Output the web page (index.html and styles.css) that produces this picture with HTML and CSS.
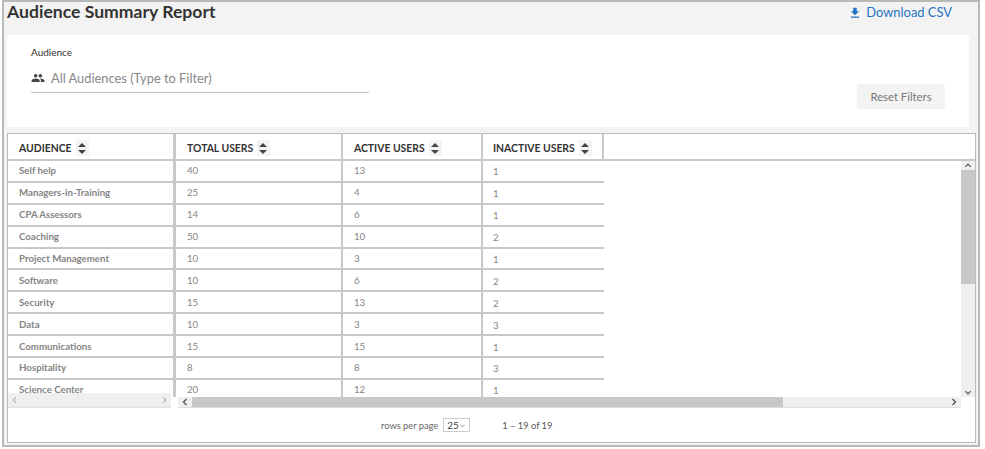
FILE: index.html
```html
<!DOCTYPE html>
<html lang="en">
  <head>
    <title>Audience Summary Report</title>
    <meta charset="utf-8" />
    <link rel="stylesheet" href="styles.css">
  </head>
  <body>
    <div class="report">
      <div class="top">
        <h1>Audience Summary Report</h1>
        <a class="download" href="#">
          <svg viewBox="0 0 24 24" width="14" height="14"><path d="M19 9h-4V3H9v6H5l7 7 7-7zM5 18v2h14v-2H5z"/></svg>
          Download CSV
        </a>
      </div>
      <div class="filters">
        <div class="filter">
          <label>Audience</label>
          <div class="filter-input">
            <svg viewBox="0 0 24 24" width="14" height="14"><path d="M16 11c1.66 0 2.99-1.34 2.99-3S17.66 5 16 5c-1.66 0-3 1.34-3 3s1.34 3 3 3zm-8 0c1.66 0 2.99-1.34 2.99-3S9.66 5 8 5C6.34 5 5 6.34 5 8s1.34 3 3 3zm0 2c-2.33 0-7 1.17-7 3.5V19h14v-2.5c0-2.33-4.67-3.5-7-3.5zm8 0c-.29 0-.62.02-.97.05 1.16.84 1.97 1.97 1.97 3.45V19h6v-2.5c0-2.33-4.67-3.5-7-3.5z"/></svg>
            <span>All Audiences (Type to Filter)</span>
          </div>
        </div>
        <button class="reset">Reset Filters</button>
      </div>
      <div class="grid">
        <div class="row head">
          <div class="cell first">AUDIENCE <i class="sort"></i></div>
          <div class="cell">TOTAL USERS <i class="sort"></i></div>
          <div class="cell">ACTIVE USERS <i class="sort"></i></div>
          <div class="cell">INACTIVE USERS <i class="sort"></i></div>
        </div>
        <div class="body">
          <div class="rows">
            <div class="row"><div class="cell first">Self help</div><div class="cell">40</div><div class="cell">13</div><div class="cell low">1</div></div>
            <div class="row"><div class="cell first">Managers-in-Training</div><div class="cell">25</div><div class="cell">4</div><div class="cell low">1</div></div>
            <div class="row"><div class="cell first">CPA Assessors</div><div class="cell">14</div><div class="cell">6</div><div class="cell low">1</div></div>
            <div class="row"><div class="cell first">Coaching</div><div class="cell">50</div><div class="cell">10</div><div class="cell low">2</div></div>
            <div class="row"><div class="cell first">Project Management</div><div class="cell">10</div><div class="cell">3</div><div class="cell low">1</div></div>
            <div class="row"><div class="cell first">Software</div><div class="cell">10</div><div class="cell">6</div><div class="cell low">2</div></div>
            <div class="row"><div class="cell first">Security</div><div class="cell">15</div><div class="cell">13</div><div class="cell low">2</div></div>
            <div class="row"><div class="cell first">Data</div><div class="cell">10</div><div class="cell">3</div><div class="cell low">3</div></div>
            <div class="row"><div class="cell first">Communications</div><div class="cell">15</div><div class="cell">15</div><div class="cell low">1</div></div>
            <div class="row"><div class="cell first">Hospitality</div><div class="cell">8</div><div class="cell">8</div><div class="cell low">3</div></div>
            <div class="row"><div class="cell first">Science Center</div><div class="cell">20</div><div class="cell">12</div><div class="cell low">1</div></div>
          </div>
          <div class="vbar">
            <svg class="arrow" viewBox="0 0 10 10" width="10" height="9"><path d="M2 6.5 5 3.5 8 6.5"/></svg>
            <div class="vthumb"></div>
            <svg class="arrow end" viewBox="0 0 10 10" width="10" height="9"><path d="M2 3.5 5 6.5 8 3.5"/></svg>
          </div>
        </div>
        <div class="hbars">
          <div class="hbar-frozen">
            <svg viewBox="0 0 10 10" width="9" height="10"><path d="M6.5 2 3.5 5 6.5 8"/></svg>
            <svg viewBox="0 0 10 10" width="9" height="10"><path d="M3.5 2 6.5 5 3.5 8"/></svg>
          </div>
          <div class="hbar">
            <svg class="arrow" viewBox="0 0 10 10" width="10" height="10"><path d="M6.5 2 3.5 5 6.5 8"/></svg>
            <div class="hthumb"></div>
            <svg class="arrow end" viewBox="0 0 10 10" width="10" height="10"><path d="M3.5 2 6.5 5 3.5 8"/></svg>
          </div>
        </div>
        <div class="pager">
          <span>rows per page</span>
          <div class="perpage">25
            <svg viewBox="0 0 10 10" width="7" height="7"><path d="M2 4 5 7 8 4"/></svg>
          </div>
          <span class="range">1 – 19 of 19</span>
        </div>
      </div>
    </div>
  </body>
</html>
```

FILE: styles.css
```css
body {
  margin: 0;
  font-family: Lato, "Open Sans", sans-serif;
  background: #fff;
}

.report {
  box-sizing: border-box;
  width: 978px;
  height: 447px;
  margin-left: 2px;
  padding: 0 0 0 3px;
  border: 2px solid #b9b9b9;
  background: #f3f3f3;
}

.top {
  display: flex;
  justify-content: space-between;
  align-items: flex-start;
  height: 33px;
}

h1 {
  margin: 0;
  font-size: 17.6px;
  font-weight: 700;
  line-height: 19px;
  color: #333;
}

.download {
  display: flex;
  align-items: center;
  gap: 4px;
  margin: 2px 26px 0 0;
  font-size: 12.9px;
  line-height: 17px;
  color: #1f74c4;
  text-decoration: none;
}

.download svg {
  fill: #1f74c4;
}

.filters {
  box-sizing: border-box;
  display: flex;
  justify-content: space-between;
  width: 962px;
  height: 92px;
  padding: 0 24px;
  border-radius: 3px;
  background: #fff;
}

.filter {
  width: 338px;
  padding-top: 11px;
}

.filter label {
  display: block;
  font-size: 10px;
  line-height: 13px;
  color: #333;
}

.filter-input {
  box-sizing: border-box;
  display: flex;
  align-items: center;
  gap: 6px;
  height: 28px;
  margin-top: 6px;
  padding-bottom: 2px;
  border-bottom: 1px solid #c4c4c4;
  font-size: 12.85px;
  color: #888;
}

.filter-input svg {
  fill: #444;
}

.reset {
  align-self: flex-end;
  width: 88px;
  height: 25px;
  margin-bottom: 18px;
  padding: 0;
  border: 0;
  border-radius: 3px;
  background: #f3f3f3;
  font-family: inherit;
  font-size: 11.3px;
  color: #777;
}

.grid {
  box-sizing: border-box;
  width: 969px;
  height: 310px;
  margin-top: 6px;
  border: 1px solid #bbb;
  background: #fff;
}

.row {
  display: grid;
  grid-template-columns: 168px 167px 140px 121px;
  height: 21.9px;
  font-size: 9.7px;
  font-weight: 700;
  color: #858585;
}

.cell {
  box-sizing: border-box;
  display: flex;
  align-items: center;
  padding: 0 0 1px 11px;
  border-right: 2px solid #c8c8c8;
  border-bottom: 2px solid #c8c8c8;
}

.cell.first {
  border-right-width: 3px;
}

.cell:last-child {
  border-right: 0;
  padding-left: 10px;
  font-weight: 400;
}

.cell.low {
  padding-top: 1px;
  padding-bottom: 0;
}

.row .cell:nth-child(2),
.row .cell:nth-child(3) {
  font-weight: 400;
}

.row.head {
  height: 25px;
  border-bottom: 2px solid #c8c8c8;
  box-sizing: content-box;
  font-size: 10.4px;
  color: #333;
}

.row.head .cell {
  border-bottom: 0;
  padding-top: 2px;
  padding-bottom: 0;
  font-weight: 700;
}

.row.head .cell:last-child {
  border-right: 2px solid #c8c8c8;
}

.sort {
  position: relative;
  width: 13px;
  height: 16px;
  margin-left: 4px;
  background: #f4f4f4;
}

.sort::before,
.sort::after {
  content: "";
  position: absolute;
  left: 2px;
  border-left: 4px solid transparent;
  border-right: 4px solid transparent;
}

.sort::before {
  top: 3px;
  border-bottom: 4px solid #444;
}

.sort::after {
  bottom: 2px;
  border-top: 4px solid #444;
}

.body {
  display: flex;
  height: 236px;
}

.rows {
  flex: 1;
  overflow: hidden;
}

.vbar {
  display: flex;
  flex-direction: column;
  align-items: center;
  width: 14px;
  background: #efefef;
}

.arrow {
  flex: none;
}

svg path {
  stroke-width: 1.4;
}

.arrow path,
.hbar-frozen path,
.perpage path {
  fill: none;
  stroke: #555;
}

.vthumb {
  width: 100%;
  height: 114px;
  background: #c8c8c8;
}

.arrow.end {
  margin-top: auto;
}

.hbars {
  display: flex;
  height: 11px;
}

.hbar-frozen {
  position: relative;
  display: flex;
  justify-content: space-between;
  align-items: center;
  box-sizing: border-box;
  width: 163px;
  height: 15px;
  margin-top: -4px;
  padding: 0 2px;
  background: #efefef;
  border-bottom: 2px solid #e4e4e4;
}

.hbar-frozen path {
  stroke: #bbb;
}

.hbar {
  display: flex;
  align-items: center;
  box-sizing: border-box;
  width: 783px;
  margin-left: 7px;
  border-bottom: 1px solid #ddd;
  background: #efefef;
}

.hbar .arrow {
  margin: 0 2px;
}

.hbar .arrow.end {
  margin: 0 2px 0 auto;
}

.hthumb {
  width: 591px;
  height: 100%;
  background: #c8c8c8;
}

.pager {
  display: flex;
  align-items: center;
  height: 34px;
  padding-left: 373px;
  font-size: 9.3px;
  color: #666;
}

.perpage {
  box-sizing: border-box;
  display: flex;
  justify-content: space-between;
  align-items: center;
  width: 27px;
  height: 14px;
  margin-left: 5px;
  padding: 0 3px;
  border: 1px solid #ccc;
  font-size: 10px;
  color: #444;
}

.perpage path {
  stroke: #999;
}

.range {
  margin-left: 32px;
  color: #555;
}
```
